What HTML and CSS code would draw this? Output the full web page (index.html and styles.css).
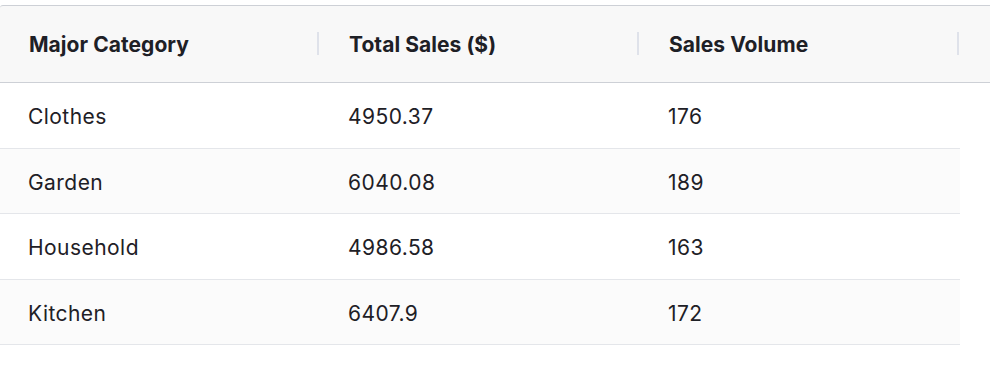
FILE: index.html
```html
<!DOCTYPE html>
<html lang="en">
<head>
<meta charset="utf-8">
<title>Sales by Category</title>
<link rel="stylesheet" href="styles.css">
</head>
<body>
<div class="table">
  <div class="thead">
    <div class="th">Major Category</div>
    <div class="th">Total Sales ($)</div>
    <div class="th">Sales Volume</div>
    <div class="th gutter"></div>
  </div>
  <div class="tbody">
    <div class="tr">
      <div class="td">Clothes</div>
      <div class="td">4950.37</div>
      <div class="td">176</div>
    </div>
    <div class="tr alt">
      <div class="td">Garden</div>
      <div class="td">6040.08</div>
      <div class="td">189</div>
    </div>
    <div class="tr">
      <div class="td">Household</div>
      <div class="td">4986.58</div>
      <div class="td">163</div>
    </div>
    <div class="tr alt">
      <div class="td">Kitchen</div>
      <div class="td">6407.9</div>
      <div class="td">172</div>
    </div>
  </div>
</div>
</body>
</html>
```
FILE: styles.css
```css
html, body {
  margin: 0;
  padding: 0;
  background: #ffffff;
}
body {
  padding-top: 5px;
  font-family: Inter, "Noto Sans", sans-serif;
  color: #1e2026;
}
.table {
  width: 990px;
}
.thead {
  display: grid;
  grid-template-columns: 320px 320px 320px 30px;
  height: 76px;
  background: #f8f8f8;
  border-top: 1px solid #cdd0d6;
  border-bottom: 1px solid #cdd0d6;
  border-top-left-radius: 3px;
}
.th {
  position: relative;
  display: flex;
  align-items: center;
  padding-left: 29px;
  font-size: 21px;
  font-weight: 700;
  letter-spacing: 0.05px;
}
.th:not(.gutter)::after {
  content: "";
  position: absolute;
  right: 1px;
  top: 26px;
  width: 2px;
  height: 23px;
  background: #dfe2ea;
}
.tbody {
  width: 960px;
}
.tr {
  display: grid;
  grid-template-columns: 320px 320px 320px;
  height: 65.5px;
  box-sizing: border-box;
  border-bottom: 1px solid #e4e6ea;
  background: #ffffff;
}
.tr.alt {
  background: #fbfbfb;
}
.td {
  display: flex;
  align-items: center;
  padding-left: 28px;
  padding-top: 3px;
  font-size: 21px;
  font-weight: 400;
  letter-spacing: 0.45px;
}
```
